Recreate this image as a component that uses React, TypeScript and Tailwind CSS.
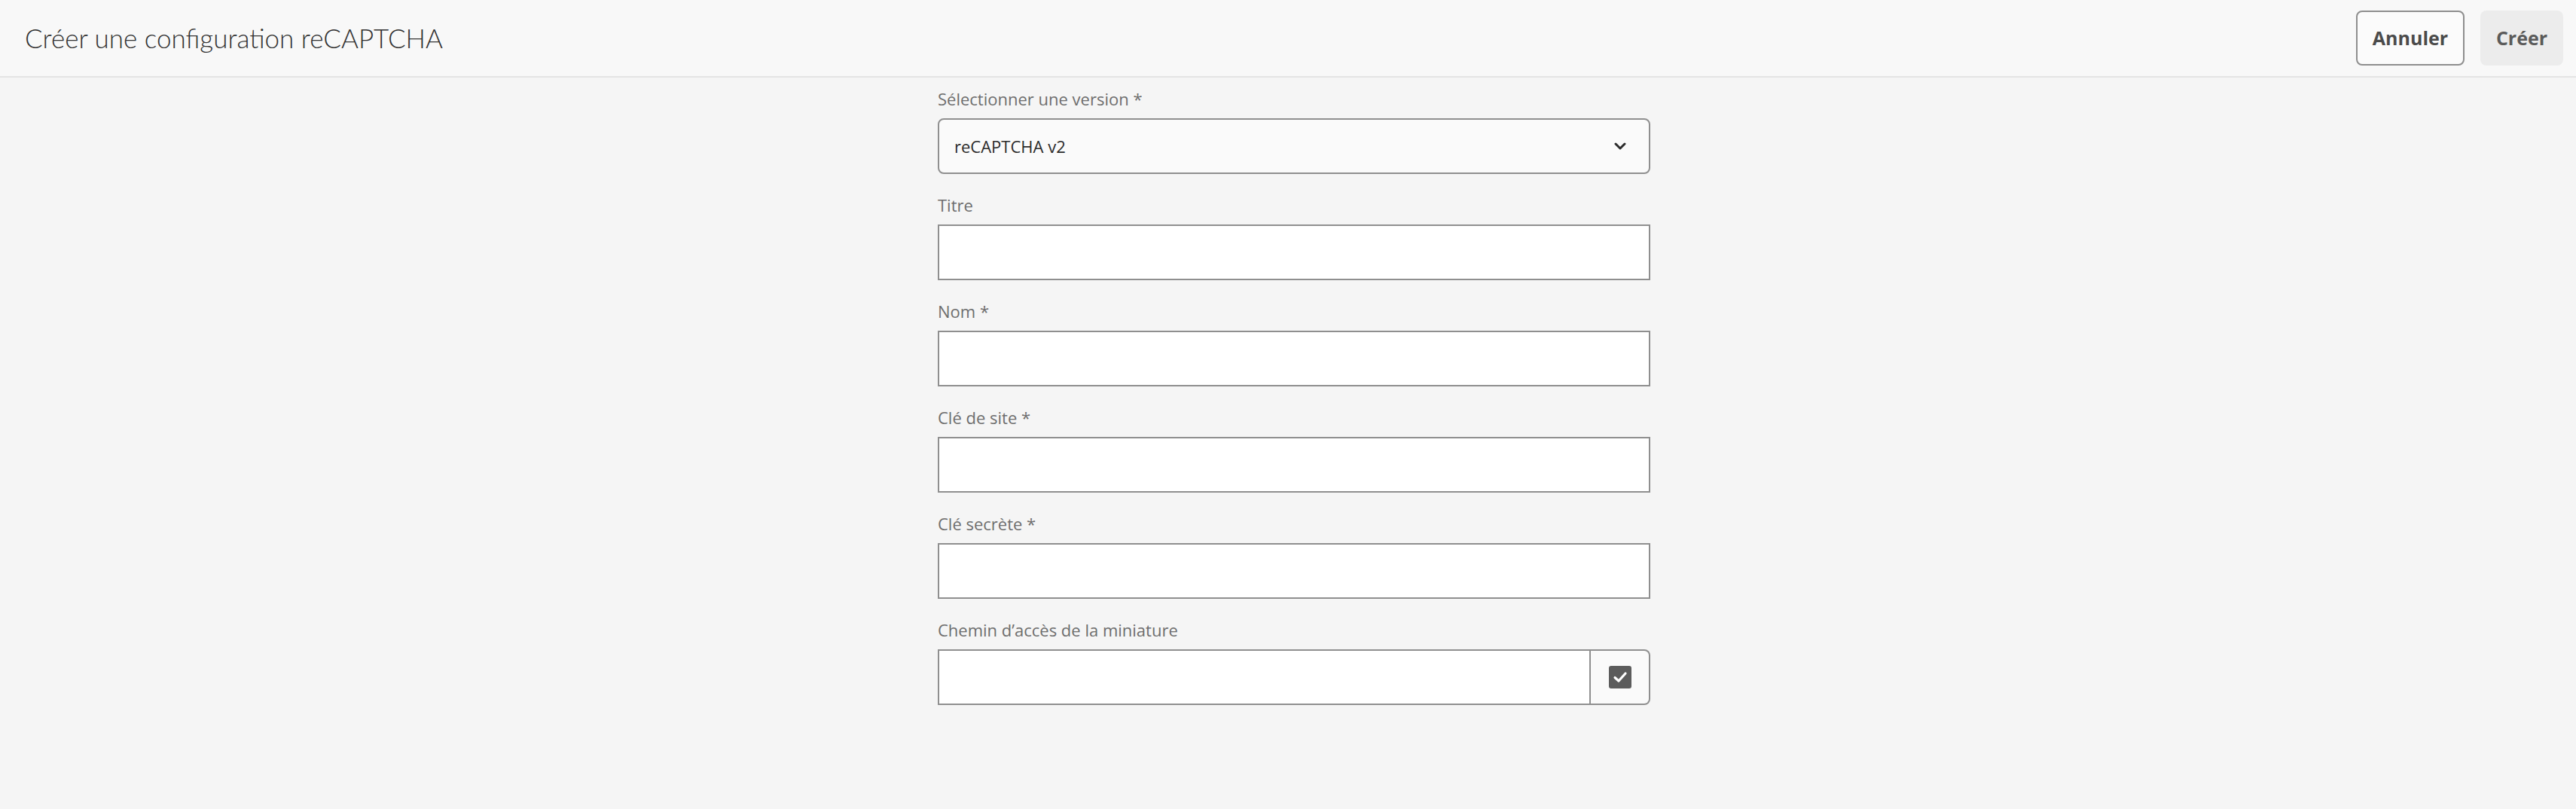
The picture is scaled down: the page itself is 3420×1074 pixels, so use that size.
import React from "react";

const labelCls =
  "block text-[22px] leading-[30px] text-[#6e6e6e] font-['Open_Sans',sans-serif] mb-[11px]";

function Field({ label, children }: { label: string; children: React.ReactNode }) {
  return (
    <div className="flex flex-col">
      <label className={labelCls}>{label}</label>
      {children}
    </div>
  );
}

function TextInput() {
  return (
    <input
      type="text"
      className="h-[74px] w-full bg-white border-2 border-[#8f8f8f] outline-none px-4 text-[22px]"
    />
  );
}

export default function App() {
  return (
    <div className="min-h-[1074px] w-full bg-[#f5f5f5] font-['Open_Sans',sans-serif]">
      <header className="h-[103px] bg-[#f8f8f8] border-b-[2px] border-[#e4e4e4] flex items-center justify-between pl-[33px] pr-[17px]">
        <h1 className="text-[35px] font-light text-[#323232] font-['Lato',sans-serif] leading-none">
          Créer une configuration reCAPTCHA
        </h1>
        <div className="flex items-center gap-[21px]">
          <button className="h-[73px] w-[144px] rounded-[8px] border-2 border-[#8e8e8e] bg-[#fbfbfb] text-[25px] font-bold text-[#4b4b4b]">
            Annuler
          </button>
          <button className="h-[73px] w-[110px] rounded-[8px] bg-[#ececec] text-[25px] font-bold text-[#5a5a5a]">
            Créer
          </button>
        </div>
      </header>

      <main className="flex justify-center pl-[16px] pt-[13px]">
        <div className="w-[946px] flex flex-col gap-[26px]">
          <Field label="Sélectionner une version *">
            <div className="h-[74px] w-full rounded-[8px] border-2 border-[#8f8f8f] bg-[#fafafa] flex items-center justify-between pl-[20px] pr-[30px]">
              <span className="text-[22px] text-[#2c2c2c]">reCAPTCHA v2</span>
              <svg width="16" height="10" viewBox="0 0 16 10" fill="none">
                <polyline
                  points="2,2 8,8 14,2"
                  stroke="#2c2c2c"
                  strokeWidth="3"
                  strokeLinecap="round"
                  strokeLinejoin="round"
                />
              </svg>
            </div>
          </Field>
          <Field label="Titre">
            <TextInput />
          </Field>
          <Field label="Nom *">
            <TextInput />
          </Field>
          <Field label="Clé de site *">
            <TextInput />
          </Field>
          <Field label="Clé secrète *">
            <TextInput />
          </Field>
          <Field label="Chemin d’accès de la miniature">
            <div className="h-[74px] w-full flex">
              <input
                type="text"
                className="flex-1 h-full bg-white border-2 border-[#8f8f8f] outline-none px-4 text-[22px]"
              />
              <button className="w-[79px] h-full bg-[#fafafa] border-2 border-l-0 border-[#8f8f8f] rounded-r-[8px] flex items-center justify-center">
                <span className="w-[30px] h-[30px] rounded-[3px] bg-[#5c5c5c] flex items-center justify-center">
                  <svg width="20" height="16" viewBox="0 0 20 16" fill="none">
                    <polyline
                      points="3,8.5 8,13 17,3"
                      stroke="#ffffff"
                      strokeWidth="3.2"
                      strokeLinecap="round"
                      strokeLinejoin="round"
                    />
                  </svg>
                </span>
              </button>
            </div>
          </Field>
        </div>
      </main>
    </div>
  );
}
